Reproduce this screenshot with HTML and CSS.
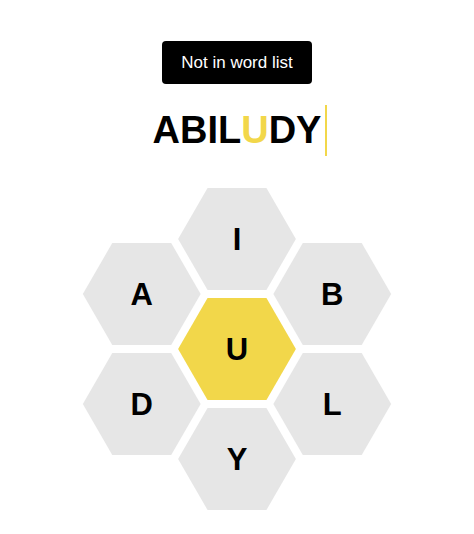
FILE: index.html
```html
<!DOCTYPE html>
<html lang="en">
<head>
<meta charset="utf-8">
<title>Spelling Bee</title>
<link rel="stylesheet" href="styles.css">
</head>
<body>
<main class="game">
  <div class="toast">Not in word list</div>
  <div class="word-row">
    <span class="word">ABIL<span class="center-letter">U</span>DY</span><span class="cursor"></span>
  </div>
  <svg class="hive" width="310" height="324" viewBox="0 0 310 324" xmlns="http://www.w3.org/2000/svg">
    <defs>
      <polygon id="hex" points="-58.9,0 -29.45,-51 29.45,-51 58.9,0 29.45,51 -29.45,51"/>
    </defs>
    <g transform="translate(155 52)">
      <use href="#hex" class="cell-outer"/>
      <text class="letter" x="0" y="11">I</text>
    </g>
    <g transform="translate(59.74 107)">
      <use href="#hex" class="cell-outer"/>
      <text class="letter" x="0" y="11">A</text>
    </g>
    <g transform="translate(250.26 107)">
      <use href="#hex" class="cell-outer"/>
      <text class="letter" x="0" y="11">B</text>
    </g>
    <g transform="translate(155 162)">
      <use href="#hex" class="cell-center"/>
      <text class="letter" x="0" y="11">U</text>
    </g>
    <g transform="translate(59.74 217)">
      <use href="#hex" class="cell-outer"/>
      <text class="letter" x="0" y="11">D</text>
    </g>
    <g transform="translate(250.26 217)">
      <use href="#hex" class="cell-outer"/>
      <text class="letter" x="0" y="11">L</text>
    </g>
    <g transform="translate(155 272)">
      <use href="#hex" class="cell-outer"/>
      <text class="letter" x="0" y="11">Y</text>
    </g>
  </svg>
</main>
</body>
</html>
```
FILE: styles.css
```css
html, body {
  margin: 0;
  padding: 0;
  background: #ffffff;
}

.game {
  display: flex;
  flex-direction: column;
  align-items: center;
  padding-top: 41px;
  font-family: "Liberation Sans", Arial, sans-serif;
}

.toast {
  height: 43px;
  line-height: 43px;
  padding: 0 19px;
  background: #000000;
  color: #ffffff;
  font-size: 17px;
  border-radius: 4px;
  white-space: nowrap;
}

.word-row {
  margin-top: 21px;
  height: 51px;
  display: flex;
  align-items: center;
}

.word {
  font-size: 38px;
  font-weight: 700;
  line-height: 51px;
  color: #000000;
  letter-spacing: 0;
}

.center-letter {
  color: #f2d74a;
}

.cursor {
  display: block;
  width: 2px;
  height: 51px;
  margin-left: 4px;
  margin-right: -6px;
  background: #f2d74a;
}

.hive {
  display: block;
  margin-top: 31px;
}

.cell-outer {
  fill: #e6e6e6;
}

.cell-center {
  fill: #f2d74a;
}

.letter {
  font-family: "Liberation Sans", Arial, sans-serif;
  font-size: 31px;
  font-weight: 700;
  fill: #000000;
  text-anchor: middle;
}
```
